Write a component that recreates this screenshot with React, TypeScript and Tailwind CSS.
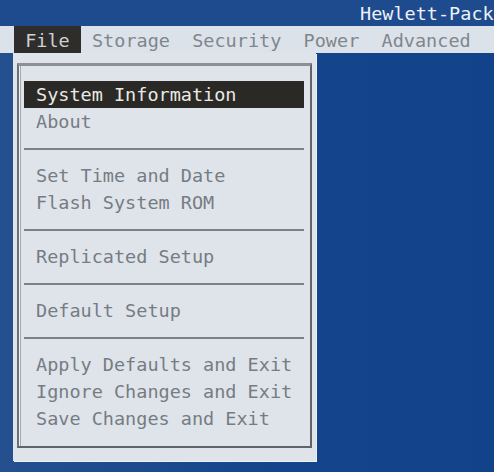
import React from 'react';

type Row = { label?: string; sep?: boolean; active?: boolean };

const rows: Row[] = [
  { label: 'System Information', active: true },
  { label: 'About' },
  { sep: true },
  { label: 'Set Time and Date' },
  { label: 'Flash System ROM' },
  { sep: true },
  { label: 'Replicated Setup' },
  { sep: true },
  { label: 'Default Setup' },
  { sep: true },
  { label: 'Apply Defaults and Exit' },
  { label: 'Ignore Changes and Exit' },
  { label: 'Save Changes and Exit' },
];

const App = () => {
  return (
    <div
      className="w-[494px] h-[472px] overflow-hidden bg-gradient-to-r from-[#24508f] via-[#15468c] to-[#11428a] text-[18.5px] leading-[27px]"
      style={{ fontFamily: '"DejaVu Sans Mono", "Liberation Mono", monospace' }}
    >
      {/* title strip */}
      <div className="h-[26px] leading-[27px] bg-[#1d4b8d] pl-[360px] whitespace-nowrap text-[#eef2f7]">
        Hewlett-Pack
      </div>

      {/* menu bar */}
      <div className="h-[27px] bg-[#dce2e9] pl-[14px] flex whitespace-pre text-[#80868d]">
        <span className="bg-[#2e2d2b] text-[#cfd1d2] pt-[1px]"> File </span>
        <span className="pt-[1px]"> Storage  Security  Power  Advanced</span>
      </div>

      {/* drop-down */}
      <div className="ml-[13px] w-[303px] h-[408px] bg-[#dfe4ea] pt-[10px] px-[4px] shadow-[1px_1px_0_#eef1f4]">
        <div className="h-[385px] border-2 border-t-[3px] border-[#5e646b] border-t-[#8c9198] border-l-[#6c7178] shadow-[inset_1px_0_0_#eef1f4,inset_2px_0_0_#a5aab0] pt-[15px] pl-[5px] pr-[6px]">
          {rows.map((r, i) =>
            r.sep ? (
              <div key={i} className="h-[27px] flex items-center">
                <div className="w-full h-[2px] bg-[#7c8187]" />
              </div>
            ) : (
              <div
                key={i}
                className={`h-[27px] pl-[12px] pt-[1px] leading-[26px] whitespace-pre ${
                  r.active ? 'bg-[#2b2926] text-[#e9e9e7]' : 'text-[#767c83]'
                }`}
              >
                {r.label}
              </div>
            )
          )}
        </div>
      </div>
    </div>
  );
};

export default App;
